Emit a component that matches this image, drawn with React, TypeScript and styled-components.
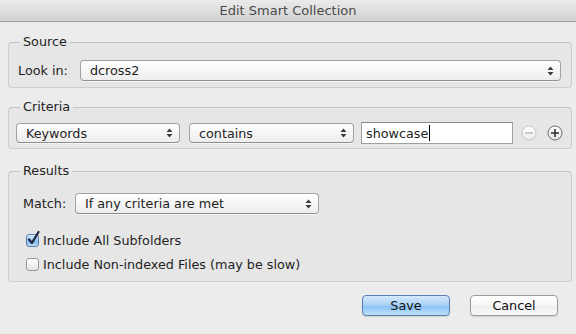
import React from 'react'
import styled, { createGlobalStyle } from 'styled-components'

const GlobalStyle = createGlobalStyle`
  html, body {
    margin: 0;
    padding: 0;
    background: #ececec;
  }
  body {
    font-family: "DejaVu Sans", "Liberation Sans", sans-serif;
    font-size: 12.75px;
    color: #1e1e1e;
  }
`

const Window = styled.div`
  width: 576px;
  height: 334px;
  background: #ececec;
  display: flex;
  flex-direction: column;
  overflow: hidden;
`

const TitleBar = styled.div`
  height: 21px;
  flex: none;
  display: flex;
  align-items: center;
  justify-content: center;
  background: linear-gradient(#ebebeb, #d2d2d2);
  border-bottom: 1px solid #9e9e9e;
  color: #4a4a4a;
  font-size: 13px;
`

const Body = styled.div`
  display: flex;
  flex-direction: column;
  padding: 12px 4px 0 8px;
`

const Group = styled.fieldset<{ $gap: number }>`
  margin: ${p => p.$gap}px 0 0 0;
  padding: 0;
  border: 1px solid #cdcdcd;
  border-top-color: #c4c4c4;
  border-radius: 4px;
  background: #e6e6e6;
  min-width: 0;
`

const Legend = styled.legend`
  margin-left: 11px;
  padding: 0 3px;
  line-height: 16px;
  color: #1e1e1e;
`

const Content = styled.div<{ $pad: string }>`
  padding: ${p => p.$pad};
  display: flex;
  flex-direction: column;
`

const Row = styled.div`
  display: flex;
  align-items: center;
`

const Label = styled.span<{ $w: number }>`
  width: ${p => p.$w}px;
  flex: none;
`

const SelectBox = styled.div<{ $w?: number; $h?: number; $ml?: number }>`
  position: relative;
  box-sizing: border-box;
  height: ${p => p.$h ?? 21}px;
  ${p => (p.$w ? `width: ${p.$w}px; flex: none;` : 'flex: 1;')}
  margin-left: ${p => p.$ml ?? 0}px;
  border: 1px solid #a2a2a2;
  border-bottom-color: #8e8e8e;
  border-radius: 4px;
  background: linear-gradient(#ffffff, #f6f6f6 50%, #ededed);
  box-shadow: 0 1px 0 rgba(255, 255, 255, 0.6);
  display: flex;
  align-items: center;
  padding-left: 9px;
`

const Arrows = styled.svg`
  position: absolute;
  right: 6px;
  top: 50%;
  margin-top: -5px;
`

const Select = ({ value, w, h, ml }: { value: string; w?: number; h?: number; ml?: number }) => (
  <SelectBox $w={w} $h={h} $ml={ml}>
    {value}
    <Arrows width="7" height="10" viewBox="0 0 7 10">
      <path d="M3.5 0.5 L6.5 4 L0.5 4 Z" fill="#3c3c3c" />
      <path d="M3.5 9.5 L6.5 6 L0.5 6 Z" fill="#3c3c3c" />
    </Arrows>
  </SelectBox>
)

const TextField = styled.div`
  box-sizing: border-box;
  width: 152px;
  height: 22px;
  flex: none;
  border: 1px solid #a0a0a0;
  border-top-color: #8a8a8a;
  background: #fff;
  display: flex;
  align-items: center;
  padding-left: 4px;
  margin-left: 7px;
`

const Caret = styled.span`
  display: inline-block;
  width: 1px;
  height: 16px;
  background: #000;
  margin-left: 1px;
`

const RoundButton = styled.svg<{ $ml: number }>`
  flex: none;
  margin-left: ${p => p.$ml}px;
`

const CircleButton = ({ kind, ml }: { kind: 'minus' | 'plus'; ml: number }) => {
  const dim = kind === 'minus'
  const stroke = dim ? '#c4c4c4' : '#6a6a6a'
  const mark = dim ? '#bdbdbd' : '#2a2a2a'
  return (
    <RoundButton $ml={ml} width="16" height="16" viewBox="0 0 16 16">
      <defs>
        <linearGradient id={`g-${kind}`} x1="0" y1="0" x2="0" y2="1">
          <stop offset="0" stopColor="#ffffff" />
          <stop offset="1" stopColor={dim ? '#ececec' : '#e2e2e2'} />
        </linearGradient>
      </defs>
      <circle cx="8" cy="8" r="7" fill={`url(#g-${kind})`} stroke={stroke} strokeWidth="1" />
      <rect x="4" y="7.25" width="8" height="1.5" fill={mark} />
      {kind === 'plus' && <rect x="7.25" y="4" width="1.5" height="8" fill={mark} />}
    </RoundButton>
  )
}

const CheckRow = styled.label<{ $mt: number }>`
  display: flex;
  align-items: center;
  height: 21px;
  margin-top: ${p => p.$mt}px;
`

const Box = styled.span<{ $on: boolean }>`
  position: relative;
  box-sizing: border-box;
  width: 13px;
  height: 13px;
  margin: 0 4px 0 3px;
  flex: none;
  border-radius: 3px;
  border: 1px solid ${p => (p.$on ? '#5c7fa9' : '#9a9a9a')};
  background: ${p =>
    p.$on
      ? 'linear-gradient(#d6e9fb, #9ec9f1 50%, #7eb5ea 51%, #b8dcfa)'
      : 'linear-gradient(#ffffff, #f1f1f1 50%, #e6e6e6)'};
`

const Tick = styled.svg`
  position: absolute;
  left: 0px;
  top: -4px;
`

const Checkbox = ({ on, mt, children }: { on: boolean; mt: number; children: React.ReactNode }) => (
  <CheckRow $mt={mt}>
    <Box $on={on}>
      {on && (
        <Tick width="13" height="15" viewBox="0 0 13 15">
          <path d="M2 8.5 L5 12 L11.5 1" fill="none" stroke="#1b2340" strokeWidth="2.2" strokeLinecap="round" strokeLinejoin="round" />
        </Tick>
      )}
    </Box>
    {children}
  </CheckRow>
)

const ButtonBar = styled.div`
  display: flex;
  justify-content: flex-end;
  gap: 20px;
  margin-top: 13px;
  padding-right: 14px;
`

const Button = styled.div<{ $primary?: boolean }>`
  box-sizing: border-box;
  width: 88px;
  height: 21px;
  border-radius: 4px;
  display: flex;
  align-items: center;
  justify-content: center;
  color: #111;
  border: 1px solid ${p => (p.$primary ? '#5a7db0' : '#9c9c9c')};
  background: ${p =>
    p.$primary
      ? 'linear-gradient(#d5e9fc, #a7d0f6 50%, #86bff2 51%, #bfe1fc)'
      : 'linear-gradient(#ffffff, #f7f7f7 50%, #eeeeee 51%, #f9f9f9)'};
  box-shadow: 0 1px 1px rgba(0, 0, 0, 0.12);
`

export default function App() {
  return (
    <Window>
      <GlobalStyle />
      <TitleBar>Edit Smart Collection</TitleBar>
      <Body>
        <Group $gap={0}>
          <Legend>Source</Legend>
          <Content $pad="10px 10px 6px 9px">
            <Row>
              <Label $w={62}>Look in:</Label>
              <Select value="dcross2" />
            </Row>
          </Content>
        </Group>

        <Group $gap={11}>
          <Legend>Criteria</Legend>
          <Content $pad="7px 10px 4px 7px">
            <Row>
              <Select value="Keywords" w={164} h={20} />
              <Select value="contains" w={165} h={20} ml={9} />
              <TextField>
                showcase
                <Caret />
              </TextField>
              <CircleButton kind="minus" ml={8} />
              <CircleButton kind="plus" ml={10} />
            </Row>
          </Content>
        </Group>

        <Group $gap={14}>
          <Legend>Results</Legend>
          <Content $pad="14px 10px 6px 14px">
            <Row>
              <Label $w={52}>Match:</Label>
              <Select value="If any criteria are met" w={244} />
            </Row>
            <Checkbox on mt={16}>Include All Subfolders</Checkbox>
            <Checkbox on={false} mt={3}>Include Non-indexed Files (may be slow)</Checkbox>
          </Content>
        </Group>

        <ButtonBar>
          <Button $primary>Save</Button>
          <Button>Cancel</Button>
        </ButtonBar>
      </Body>
    </Window>
  )
}
